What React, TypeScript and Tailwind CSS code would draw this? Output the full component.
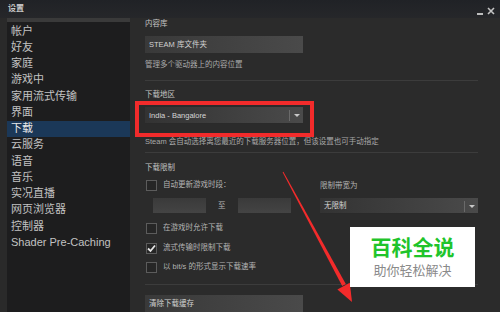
import React from 'react';

const navItems = [
    '帐户',
    '好友',
    '家庭',
    '游戏中',
    '家用流式传输',
    '界面',
    '下载',
    '云服务',
    '语音',
    '音乐',
    '实况直播',
    '网页浏览器',
    '控制器',
    'Shader Pre-Caching',
];

const font = { fontFamily: '"Liberation Sans", "Noto Sans CJK SC", sans-serif' };

const Checkbox: React.FC<{ label: string; checked?: boolean }> = ({ label, checked = false }) => (
    <div className="flex h-[14px] items-center">
        <div className="ml-[1px] flex h-[11px] w-[11px] items-center justify-center border border-[#5c5c5c] bg-[#262626]">
            {checked && (
                <svg width="9" height="9" viewBox="0 0 9 9">
                    <path d="M1 4.5 L3.5 7 L8 1.5" fill="none" stroke="#e6e6e6" strokeWidth="1.8" />
                </svg>
            )}
        </div>
        <span className="ml-[6px] text-[7.5px] leading-none text-[#b4b4b4]">{label}</span>
    </div>
);

const Dropdown: React.FC<{ value: string; className?: string }> = ({ value, className = '' }) => (
    <div
        className={`flex items-center bg-gradient-to-r from-[#333333] to-[#4a4a4a] shadow-[inset_0_-1px_0_#2a2a2a] ${className}`}
    >
        <span className="flex-1 pl-[4px] text-[7.5px] leading-none text-[#d6d6d6]">{value}</span>
        <div className="h-[11px] w-px bg-[#6a6a6a]" />
        <div className="flex w-[13px] justify-center">
            <div className="h-0 w-0 border-x-[3px] border-t-[3px] border-x-transparent border-t-[#c8c8c8]" />
        </div>
    </div>
);

const Button: React.FC<{ label: string }> = ({ label }) => (
    <div className="flex h-[17px] w-[158px] items-center bg-gradient-to-r from-[#393939] to-[#4a4a4a] pl-[4px] text-[7.5px] leading-none text-[#d2d2d2]">
        {label}
    </div>
);

const Divider: React.FC<{ className?: string }> = ({ className = '' }) => (
    <div className={`h-px w-[333px] bg-[#3c3c3c] ${className}`} />
);

export default function App() {
    return (
        <div className="relative flex h-[312px] w-[500px] flex-col overflow-hidden bg-[#2a2a2a]" style={font}>
            {/* Title bar */}
            <div className="flex h-[22px] items-center bg-gradient-to-b from-[#202226] to-[#26272a] pl-[8px]">
                <span className="text-[8px] font-bold leading-none text-[#c8c8c8]">设置</span>
                <div className="ml-auto flex items-start gap-[4px] pr-[5px] text-[#bdbdbd]">
                    <div className="mt-[9px] h-[2px] w-[6px] bg-[#bdbdbd]" />
                    <svg width="8" height="8" viewBox="0 0 8 8" className="mt-[3px]">
                        <path d="M1 1 L7 7 M7 1 L1 7" stroke="#c4c4c4" strokeWidth="1.6" />
                    </svg>
                </div>
            </div>

            <div className="flex flex-1">
                {/* Left navigation */}
                <div className="ml-[7px] flex w-[123px] flex-col bg-[#1d1d1e]">
                    <div className="h-[4px] bg-[#3a3a3a]" />
                    <div className="pt-[1px]">
                        {navItems.map((item) => (
                            <div
                                key={item}
                                className={`flex h-[16.25px] items-center pl-[4px] text-[11px] leading-none ${
                                    item === '下载' ? 'bg-[#1b3858] text-[#e8e8e8]' : 'text-[#c2c2c2]'
                                }`}
                            >
                                {item}
                            </div>
                        ))}
                    </div>
                </div>

                {/* Right content */}
                <div className="flex flex-1 flex-col bg-[#2b2b2b] pl-[15px]">
                    <div className="flex h-[12px] items-center text-[7.5px] leading-none text-[#c4c4c4]">内容库</div>
                    <div className="mt-[6px]">
                        <Button label="STEAM 库文件夹" />
                    </div>
                    <div className="mt-[6px] flex h-[12px] items-center text-[7.5px] leading-none text-[#aaaaaa]">
                        管理多个驱动器上的内容位置
                    </div>
                    <Divider className="mt-[9px]" />
                    <div className="mt-[8px] flex h-[12px] items-center text-[7.5px] leading-none text-[#c4c4c4]">下载地区</div>
                    <Dropdown value="India - Bangalore" className="mt-[6px] h-[17px] w-[158px]" />
                    <div className="mt-[12px] flex h-[12px] items-center whitespace-nowrap text-[7.5px] leading-none text-[#a8a8a8]">
                        Steam 会自动选择离您最近的下载服务器位置，但该设置也可手动指定
                    </div>
                    <Divider className="mt-[4px]" />
                    <div className="mt-[9px] flex h-[12px] items-center text-[7.5px] leading-none text-[#c4c4c4]">下载限制</div>

                    <div className="mt-[4px] flex">
                        <div className="flex w-[175px] flex-col">
                            <Checkbox label="自动更新游戏时段：" />
                            <div className="ml-[8px] mt-[6px] flex items-center">
                                <div className="h-[15px] w-[53px] bg-gradient-to-b from-[#3a3a3a] to-[#444444]" />
                                <span className="mx-[12px] text-[7.5px] leading-none text-[#b4b4b4]">至</span>
                                <div className="h-[15px] w-[53px] bg-gradient-to-b from-[#3a3a3a] to-[#444444]" />
                            </div>
                        </div>
                        <div className="flex flex-col">
                            <div className="mt-[2px] flex h-[12px] items-center text-[7.5px] leading-none text-[#b4b4b4]">
                                限制带宽为
                            </div>
                            <Dropdown value="无限制" className="mt-[6px] h-[16px] w-[158px]" />
                        </div>
                    </div>

                    <div className="mt-[7px]">
                        <Checkbox label="在游戏时允许下载" />
                    </div>
                    <div className="mt-[6px]">
                        <Checkbox label="流式传输时限制下载" checked />
                    </div>
                    <div className="mt-[5px]">
                        <Checkbox label="以 bit/s 的形式显示下载速率" />
                    </div>
                    <Divider className="mt-[10px]" />
                    <div className="mt-[10px]">
                        <Button label="清除下载缓存" />
                    </div>
                </div>
            </div>

            {/* Annotation: red highlight box */}
            <div className="absolute left-[135px] top-[101px] h-[36px] w-[179px] border-[4px] border-[#f22b2b]" />

            {/* Annotation: red arrow */}
            <svg className="absolute left-0 top-0" width="500" height="312" viewBox="0 0 500 312">
                <polygon points="283.4,171.8 282.6,172.2 342.2,286 345.8,284" fill="#f22b2b" />
                <polygon points="352,302 337.4,289.4 349.8,282.8" fill="#f22b2b" />
            </svg>

            {/* Watermark */}
            <div className="absolute left-[350px] top-[227px] flex h-[60px] w-[125px] flex-col items-center justify-center gap-[6px] bg-white">
                <span className="text-[21px] font-bold leading-none text-[#1fc42b]">百科全说</span>
                <span className="text-[13px] leading-none text-[#8a8a8a]">助你轻松解决</span>
            </div>
        </div>
    );
}
